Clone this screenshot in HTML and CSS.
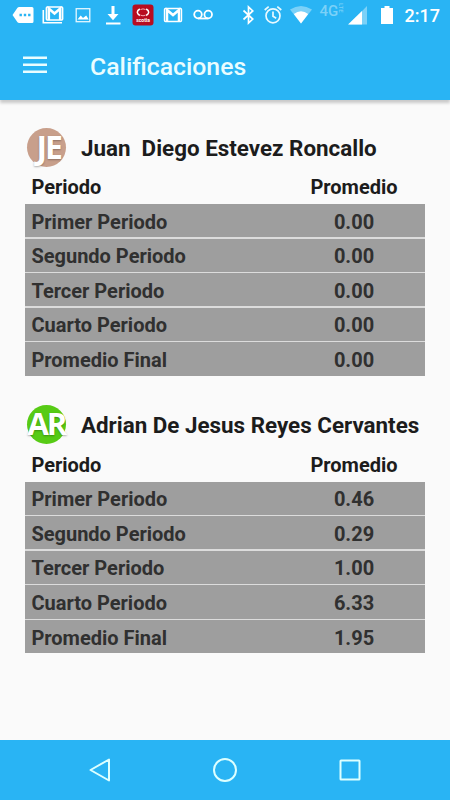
FILE: index.html
```html
<!DOCTYPE html>
<html lang="es">
<head>
  <meta charset="UTF-8" />
  <meta name="viewport" content="width=device-width, initial-scale=1.0" />
  <title>Calificaciones</title>
  <link rel="stylesheet" href="styles.css">
</head>
<body>
  <div class="status-bar">
    <div class="notifications">
      <svg width="30" height="30" viewBox="0 0 30 30"><path fill="#fff" fill-rule="evenodd" d="M4.500 15l5-7.200q.6-.8 1.700-.8H24q1.500 0 1.500 1.500v13Q25.500 23 24 23H11.200q-1.100 0-1.700-.8zM11.500 13.800v2.400h2.400v-2.400zm4.300 0v2.400h2.400v-2.400zm4.300 0v2.400h2.400v-2.400z"/></svg>
      <svg width="30" height="30" viewBox="0 0 30 30"><g fill="none" stroke="#fff"><path stroke-width="1.600" d="M5.300 10v12.700H24"/><rect x="8.300" y="7" width="16.400" height="13" rx="1" stroke-width="1.400"/><path stroke-width="2.600" d="M10.800 20V8.500l5.700 5 5.700-5V20"/></g></svg>
      <svg width="30" height="30" viewBox="0 0 30 30"><rect x="8.200" y="8.700" width="13.600" height="13" fill="none" stroke="#e4f7ff" stroke-width="1.300"/><path fill="#fff" d="M9.500 19.500l3.200-4 2.300 2.600 3.200-2.500 2.500 3.900z"/></svg>
      <svg width="30" height="30" viewBox="0 0 30 30"><path fill="#fff" d="M13.500 6h3v8h4L15 20.200 9.500 14h4zM8 22.600h14.500v1.800H8z"/></svg>
      <svg width="30" height="30" viewBox="0 0 30 30"><rect x="4.500" y="4.500" width="21" height="21" rx="3" fill="#b70d20"/><path fill="none" stroke="#fff" stroke-width="1.500" d="M11.800 9q-5 3.200 0 6.500M18.200 9q5 3.200 0 6.500"/><path fill="none" stroke="#f3a9b0" d="M12.500 9.500q2.500-1.200 5 0M12.500 15.200q2.500 1.200 5 0"/><text class="app-label" x="15" y="22">scotia</text></svg>
      <svg width="30" height="30" viewBox="0 0 30 30"><g fill="none" stroke="#fff"><rect x="6.500" y="8.500" width="17" height="13" rx="1" stroke-width="1.400"/><path stroke-width="2.500" d="M9 21.500V10l6 5 6-5v11.500"/></g></svg>
      <svg width="30" height="30" viewBox="0 0 30 30"><g fill="none" stroke="#fff" stroke-width="1.800"><circle cx="10" cy="14.500" r="3.800"/><circle cx="20.200" cy="14.500" r="3.800"/><path d="M10 18.500h10.200"/></g></svg>
    </div>
    <div class="system">
      <svg width="14" height="30" viewBox="0 0 14 30"><path fill="none" stroke="#fff" stroke-width="1.700" d="M3.500 10.500l9.300 8.500-4.300 4V7l4.300 4-9.300 8.500"/></svg>
      <svg width="20" height="30" viewBox="0 0 20 30"><g fill="none" stroke="#e9f9ff" stroke-width="1.700"><circle cx="11" cy="15.800" r="7"/><path d="M2.700 10l4-3.300M19.300 10l-4-3.300M11 11.500v4.700l3.200 2"/></g></svg>
      <svg width="22" height="30" viewBox="0 0 22 30"><path fill="#7bd1f8" d="M0 9.500Q11 2.500 22 9.500L11 23.500z"/><path fill="#fff" d="M3.800 14Q11 8.500 18.200 14L11 23.500z"/></svg>
      <div class="network"><span>4G</span><span class="lte">LTE</span></div>
      <svg width="20" height="30" viewBox="0 0 20 30"><path fill="#7bd1f8" d="M19 6v18.500H1z"/><path fill="#fff" d="M14 11v13.500H0z"/></svg>
      <svg class="battery" width="12" height="30" viewBox="0 0 12 30"><path fill="#fff" d="M3.500 6h5v2H12v16H0V8h3.500z"/></svg>
      <span class="clock">2:17</span>
    </div>
  </div>

  <header>
    <svg class="menu" width="24" height="18" viewBox="0 0 24 18"><path fill="#eafdff" d="M0 .5h24V3H0zM0 7.500h24V10H0zM0 14.500h24V17H0z"/></svg>
    <h1>Calificaciones</h1>
  </header>

  <main>
    <section class="student">
      <div class="student-header">
        <div class="avatar avatar-je">JE</div>
        <h2>Juan&nbsp; Diego Estevez Roncallo</h2>
      </div>
      <div class="row heading"><span>Periodo</span><span class="grade">Promedio</span></div>
      <div class="grades">
        <div class="row"><span>Primer Periodo</span><span class="grade">0.00</span></div>
        <div class="row"><span>Segundo Periodo</span><span class="grade">0.00</span></div>
        <div class="row"><span>Tercer Periodo</span><span class="grade">0.00</span></div>
        <div class="row"><span>Cuarto Periodo</span><span class="grade">0.00</span></div>
        <div class="row"><span>Promedio Final</span><span class="grade">0.00</span></div>
      </div>
    </section>

    <section class="student">
      <div class="student-header">
        <div class="avatar avatar-ar">AR</div>
        <h2>Adrian De Jesus Reyes Cervantes</h2>
      </div>
      <div class="row heading"><span>Periodo</span><span class="grade">Promedio</span></div>
      <div class="grades">
        <div class="row"><span>Primer Periodo</span><span class="grade">0.46</span></div>
        <div class="row"><span>Segundo Periodo</span><span class="grade">0.29</span></div>
        <div class="row"><span>Tercer Periodo</span><span class="grade">1.00</span></div>
        <div class="row"><span>Cuarto Periodo</span><span class="grade">6.33</span></div>
        <div class="row"><span>Promedio Final</span><span class="grade">1.95</span></div>
      </div>
    </section>
  </main>

  <footer>
    <svg width="26" height="26" viewBox="0 0 26 26"><path d="M3.500 13L22 2.500v21z"/></svg>
    <svg width="26" height="26" viewBox="0 0 26 26"><circle cx="13" cy="13" r="11"/></svg>
    <svg width="26" height="26" viewBox="0 0 26 26"><rect x="3.500" y="3.500" width="19" height="19" rx=".5"/></svg>
  </footer>
</body>
</html>
```
FILE: styles.css
```css
body {
  margin: 0;
  height: 800px;
  display: flex;
  flex-direction: column;
  overflow: hidden;
  background: #fafafa;
  color: #1c1c1c;
  font-family: Roboto, sans-serif;
}
svg {
  display: block;
  flex: none;
}

/* Status bar */
.status-bar {
  display: flex;
  justify-content: space-between;
  height: 32px;
  padding: 0 10px 0 7.5px;
  background: #29b4f4;
}
.notifications,
.system {
  display: flex;
}
.system {
  gap: 8px;
  color: #fff;
}
.app-label {
  fill: #fff;
  font-size: 5px;
  font-weight: 700;
  text-anchor: middle;
}
.network {
  display: flex;
  width: 24px;
  margin-right: -4px;
  padding-top: 3px;
  color: #7bd1f8;
  font-size: 15px;
  font-weight: 500;
  line-height: 16px;
}
.lte {
  height: 12px;
  font-size: 6px;
  line-height: 6px;
  writing-mode: vertical-rl;
}
.battery {
  margin-left: 5px;
}
.clock {
  margin-left: 4px;
  font-size: 18px;
  font-weight: 500;
  line-height: 31px;
}

/* App bar */
header {
  display: flex;
  align-items: center;
  height: 68px;
  padding-left: 23px;
  background: #29b4f4;
  box-shadow: 0 3px 3px rgba(0, 0, 0, 0.2);
}
.menu {
  margin-bottom: 3px;
}
h1 {
  margin: 0 0 0 43px;
  color: #eafdff;
  font-size: 24.8px;
  font-weight: 500;
}

/* Grades */
main {
  flex: 1;
  padding: 26.8px 25.4px 0 25.4px;
}
.student {
  height: 277.6px;
}
.student-header {
  display: flex;
  align-items: center;
  height: 41px;
}
.avatar {
  box-sizing: border-box;
  width: 39px;
  height: 39px;
  margin-left: 2px;
  border-radius: 50%;
  color: #fff;
  font-family: "Open Sans", sans-serif;
  font-weight: 700;
  line-height: 38px;
  white-space: nowrap;
  text-shadow: 0 1px 2px rgba(0, 0, 0, 0.3);
}
.avatar-je {
  padding-left: 9px;
  background: #c89f8b;
  font-size: 32px;
  letter-spacing: -2px;
}
.avatar-ar {
  background: #57cb15;
  font-size: 31px;
  letter-spacing: -2px;
  line-height: 36px;
}
h2 {
  margin: 1px 0 0 14.5px;
  font-size: 22.4px;
  font-weight: 700;
  white-space: nowrap;
}
.row {
  box-sizing: border-box;
  display: flex;
  align-items: center;
  justify-content: space-between;
  height: 33.2px;
  padding: 2px 5.6px 0 6px;
  background: #9e9e9e;
  color: #303030;
  font-size: 20px;
  font-weight: 700;
}
.grade {
  width: 130px;
  text-align: center;
}
.heading {
  height: 36.3px;
  background: none;
  color: #1c1c1c;
}
.grades {
  display: grid;
  gap: 1.4px;
  background: #dcdcdc;
}

/* Navigation bar */
footer {
  display: flex;
  justify-content: center;
  align-items: center;
  gap: 99px;
  height: 60px;
  background: #29b4f4;
}
footer svg {
  fill: none;
  stroke: #dcffff;
  stroke-width: 2;
  stroke-linejoin: round;
}
```
